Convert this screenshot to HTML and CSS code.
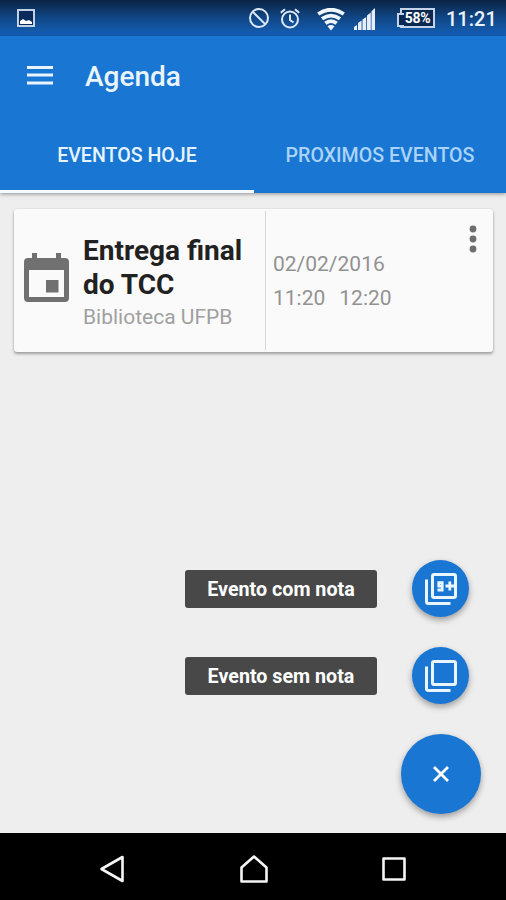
FILE: index.html
```
<!DOCTYPE html>
<html lang="pt-BR">

<head>
    <meta charset="UTF-8">
    <meta name="viewport" content="width=device-width, initial-scale=1.0">
    <title>Agenda</title>
    <link rel="stylesheet" href="styles.css">
</head>

<body>
    <div class="status-bar">
        <svg class="icon-image" width="18" height="18" viewBox="0 0 18 18">
            <rect x="1" y="1" width="16" height="16" fill="#0b2a5c" stroke="#d5e2f2" stroke-width="1.8" />
            <path d="M3 15v-3l3-2 3 2 3-1 3 2v2z" fill="#fff" />
        </svg>
        <svg class="icon-block" width="20" height="20" viewBox="0 0 20 20" fill="none" stroke="#dce8f7" stroke-width="2">
            <circle cx="10" cy="10" r="9" />
            <path d="M3.6 3.6l12.8 12.8" />
        </svg>
        <svg class="icon-alarm" width="20" height="21" viewBox="0 0 20 21" fill="none" stroke="#dce8f7" stroke-width="2">
            <circle cx="10" cy="11.5" r="8" />
            <path d="M10 6.5v5.5l3.5 2.5M.8 4.8L5 1.2M19.2 4.8L15 1.2" />
        </svg>
        <svg class="icon-wifi" width="28" height="23" viewBox="0 0 28 23" fill="none" stroke="#f0f6fd" stroke-width="3.8">
            <path d="M1.2 6Q14-2.6 26.8 6" />
            <path d="M5 10.8q9-6.4 18 0" />
            <path d="M8.4 15.3q5.6-4.4 11.2 0" />
            <path d="M10.5 18.3q3.5-2.6 7 0L14 22.6z" fill="#f0f6fd" stroke="none" />
        </svg>
        <svg class="icon-signal" width="22" height="22" viewBox="0 0 22 22" fill="#e6effa">
            <path d="M0 22v-3l3-2v5zM4 22v-7l3.6-2.5V22zM8.5 22V11.5L12.2 9v13zM13 22V7.5l3.8-3V22zM17.5 22V3.2L21 0v22z" />
        </svg>
        <div class="battery">58%</div>
        <div class="clock">11:21</div>
    </div>

    <header class="header">
        <div class="toolbar">
            <svg width="26" height="20" viewBox="0 0 26 20" fill="#e9f4ff">
                <path d="M0 0h26v3H0zM0 7.6h26v3H0zM0 15.4h26v3H0z" />
            </svg>
            <h1>Agenda</h1>
        </div>
        <nav class="tabs">
            <div class="tab active"><span>EVENTOS HOJE</span></div>
            <div class="tab"><span>PROXIMOS EVENTOS</span></div>
        </nav>
    </header>

    <main class="content">
        <section class="card">
            <div class="event">
                <svg width="45" height="50" viewBox="0 0 45 50">
                    <path fill="#707070" fill-rule="evenodd" d="M8 0h5v5h19V0h5v5h4q4 0 4 4v36q0 4-4 4H4q-4 0-4-4V9q0-4 4-4h4zM5 17v27h35V17zM22 27h12.5v12.5H22z" />
                </svg>
                <div class="event-text">
                    <h2>Entrega final<br>do TCC</h2>
                    <p>Biblioteca UFPB</p>
                </div>
            </div>
            <div class="schedule">
                <div>02/02/2016</div>
                <div class="hours"><span>11:20</span><span>12:20</span></div>
            </div>
            <svg class="more" width="8" height="28" viewBox="0 0 8 28" fill="#6e6e6e">
                <circle cx="4" cy="4" r="3.4" />
                <circle cx="4" cy="14" r="3.4" />
                <circle cx="4" cy="24" r="3.4" />
            </svg>
        </section>

        <div class="fab-menu">
            <div class="fab-row">
                <span class="fab-label">Evento com nota</span>
                <div class="fab">
                    <svg width="32" height="32" viewBox="0 0 32 32" fill="none" stroke="#e9f5ff" stroke-width="3">
                        <rect x="7.5" y="1.5" width="23" height="23" rx="1.5" />
                        <path d="M1.5 6.5v22q0 2 2 2h22" />
                        <path d="M17.2 13.2h-3.400V9.700h3.400v7.300h-4.700" stroke-width="2.8" />
                        <path d="M20.5 13h9.500M24.800 8.500v9" stroke-width="2.8" />
                    </svg>
                </div>
            </div>
            <div class="fab-row">
                <span class="fab-label">Evento sem nota</span>
                <div class="fab">
                    <svg width="32" height="32" viewBox="0 0 32 32" fill="none" stroke="#e9f5ff" stroke-width="3">
                        <rect x="7.5" y="1.5" width="23" height="23" rx="1.5" />
                        <path d="M1.5 6.5v22q0 2 2 2h22" />
                    </svg>
                </div>
            </div>
            <div class="fab fab-main">
                <svg width="16" height="16" viewBox="0 0 16 16" fill="none" stroke="#fff" stroke-width="2.8">
                    <path d="M1 1l14 14M15 1L1 15" />
                </svg>
            </div>
        </div>
    </main>

    <footer class="nav-bar">
        <svg width="26" height="28" viewBox="0 0 26 28"><path d="M2.5 14L23.5 2v24z" /></svg>
        <svg width="28" height="28" viewBox="0 0 28 28"><path d="M1.5 26.5V12.5L14 1.5l12.5 11v14z" /></svg>
        <svg width="24" height="24" viewBox="0 0 24 24"><path d="M1.5 1.5h21v21h-21z" /></svg>
    </footer>
</body>

</html>
```
FILE: styles.css
```
* {
    box-sizing: border-box;
    margin: 0;
    padding: 0;
}

body {
    display: flex;
    flex-direction: column;
    height: 900px;
    overflow: hidden;
    font-family: Roboto, sans-serif;
    background: #eeeeee;
}

svg {
    display: block;
    flex: none;
}

.status-bar {
    display: flex;
    align-items: center;
    height: 36px;
    padding: 0 12px 0 17px;
    background: linear-gradient(#0a2343, #114786 50%, #1560b8);
}

.icon-block {
    margin-left: auto;
}

.icon-alarm {
    margin-left: 11px;
}

.icon-wifi {
    margin: 2px 0 0 17px;
}

.icon-signal {
    margin: 2px 0 0 9px;
}

.battery {
    position: relative;
    width: 35px;
    height: 20px;
    margin-left: 24px;
    border: 2px solid #c3d3e8;
    background: #0a2850;
    color: #fff;
    font-size: 14px;
    font-weight: 700;
    line-height: 16px;
    text-align: center;
    letter-spacing: -0.3px;
}

/* battery tip, open towards the body */
.battery::before {
    content: "";
    position: absolute;
    left: -5px;
    top: 3px;
    width: 5px;
    height: 10px;
    border: 2px solid #c3d3e8;
    border-right: 0;
    background: #0a2850;
}

.clock {
    width: 48px;
    margin-left: 11px;
    color: #e9f3ff;
    font-size: 20px;
    font-weight: 500;
    line-height: 36px;
    padding-top: 1px;
    white-space: nowrap;
}

.header {
    position: relative;
    height: 157px;
    background: #1976d2;
    box-shadow: 0 1px 4px rgba(0, 0, 0, 0.4);
}

.toolbar {
    display: flex;
    align-items: center;
    height: 80px;
    padding-left: 27px;
}

.toolbar h1 {
    margin-left: 32px;
    color: #e9f4ff;
    font-size: 28px;
    font-weight: 500;
}

.tabs {
    display: grid;
    grid-template-columns: 254px 252px;
    height: 77px;
}

.tab {
    display: flex;
    justify-content: center;
    padding-top: 27px;
    color: #a9d3f8;
    font-size: 19.6px;
    font-weight: 500;
    line-height: 25px;
    white-space: nowrap;
}

.tab.active {
    border-bottom: 3px solid #f5faff;
    color: #e6f4ff;
}

.content {
    flex: 1;
    display: flex;
    flex-direction: column;
    padding: 16px 13px 19px 14px;
}

.card {
    display: flex;
    height: 143px;
    padding: 2px 0;
    border-radius: 3px;
    background: #fafafa;
    box-shadow: 0 2px 3px rgba(0, 0, 0, 0.32), 0 0 2px rgba(0, 0, 0, 0.12);
}

.event {
    display: flex;
    width: 252px;
    padding-left: 10px;
    border-right: 1px solid #d6d6d6;
}

.event svg {
    margin-top: 42px;
}

.event-text {
    margin: 23px 0 0 14px;
}

.event-text h2 {
    color: #212121;
    font-size: 28px;
    font-weight: 700;
    line-height: 33.5px;
    white-space: nowrap;
}

.event-text p {
    color: #a0a0a0;
    font-size: 21px;
    line-height: 33px;
}

.schedule {
    flex: 1;
    padding: 36px 0 0 7px;
    color: #929292;
    font-size: 21px;
    line-height: 34px;
}

.hours {
    display: flex;
    gap: 14px;
}

.more {
    margin: 14px 16px 0 0;
}

.fab-menu {
    display: flex;
    flex-direction: column;
    align-items: flex-end;
    margin: auto 12px 0 0;
}

.fab-row {
    display: flex;
    align-items: center;
    gap: 35px;
    height: 57px;
    margin: 0 12px 30px 0;
}

.fab-label {
    width: 192px;
    height: 38px;
    border-radius: 3px;
    background: #484848;
    color: #fff;
    font-size: 19.7px;
    font-weight: 700;
    line-height: 39px;
    text-align: center;
}

.fab {
    display: flex;
    align-items: center;
    justify-content: center;
    width: 57px;
    height: 57px;
    border-radius: 50%;
    background: #1976d2;
    box-shadow: 0 3px 6px rgba(0, 0, 0, 0.35);
}

.fab-main {
    width: 80px;
    height: 80px;
}

.nav-bar {
    display: flex;
    align-items: center;
    justify-content: space-between;
    height: 67px;
    padding: 4px 100px 0 99px;
    background: #000;
}

.nav-bar path {
    fill: none;
    stroke: #f5f5f5;
    stroke-width: 2.6;
    stroke-linejoin: round;
}
```
